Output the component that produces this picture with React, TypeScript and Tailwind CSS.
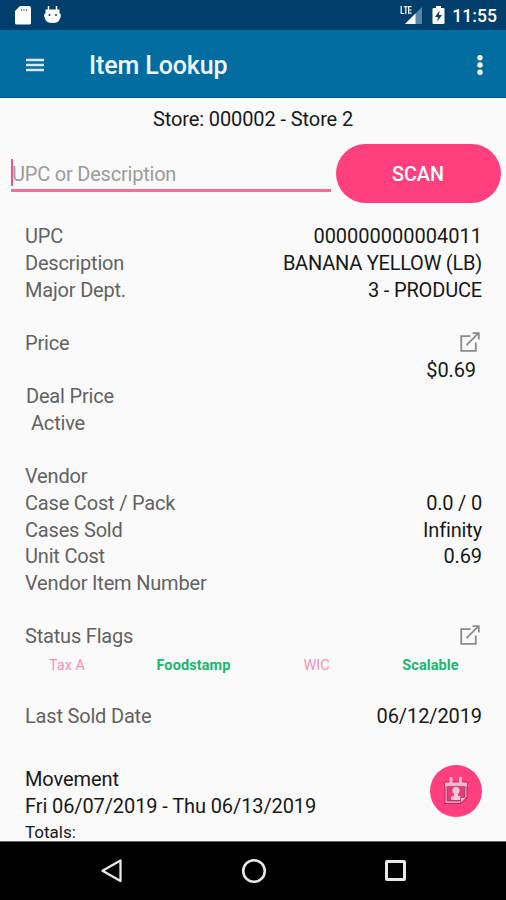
import React from 'react';

interface RowProps {
  label?: string;
  value?: React.ReactNode;
  className?: string;
  valueClassName?: string;
}

const Row: React.FC<RowProps> = ({ label, value, className = '', valueClassName = 'tracking-[-0.1px]' }) => (
  <div className="flex h-[26.67px] items-center justify-between whitespace-pre">
    <span className={`tracking-[-0.19px] text-[#626262] ${className}`}>{label}</span>
    <span className={`text-[#181818] ${valueClassName}`}>{value}</span>
  </div>
);

const EditIcon: React.FC = () => (
  <svg className="h-[22px] w-[22px]" viewBox="0 0 22 22" fill="none" stroke="#8b8b8b" strokeWidth="1.8">
    <path d="M11.5 4.2H2.2V18.8H16.8V10.5M7.5 13.2L19.5 1.2M13.5 1.2H19.8V7.4" />
  </svg>
);

const StatusBar: React.FC = () => (
  <div className="flex h-[30px] items-center bg-[#003e6b] text-white">
    <svg className="ml-[14px] h-5 w-[18px]" viewBox="0 0 18 20">
      <path d="M6 1H15Q17 1 17 3V18Q17 19.5 15 19.5H3Q1 19.5 1 18V6Z" fill="#fff" />
      <path d="M7.5 4V6M10 4V6M12.5 4V6" stroke="#55718e" strokeWidth="1.1" />
    </svg>
    <svg className="ml-[11px] h-5 w-[19px]" viewBox="0 0 19 20">
      <path d="M5.5 1V5M13.5 1V5" stroke="#fff" strokeWidth="1.5" />
      <path d="M2.5 4.5H16.5V8Q19 10 17 13.5Q16 18 9.5 18Q3 18 2 13.5Q0 10 2.5 8Z" fill="#fff" />
      <circle cx="6.5" cy="10" r="1" fill="#003e6b" />
      <circle cx="13" cy="10" r="1" fill="#003e6b" />
    </svg>
    <svg className="ml-auto h-5 w-[23px]" viewBox="0 0 23 20">
      <path d="M22 2V19H5Z" fill="#5c86a5" />
      <path d="M15.5 8.5V19H5Z" fill="#fff" />
      <path d="M1.2 1V8.5H4.2M3.8 1.7H7.6M5.8 1.7V9M11.5 1.7H8.6V8.2H11.5M8.6 5H11.5" fill="none" stroke="#fff" strokeWidth="1.2" />
    </svg>
    <svg className="ml-[9px] h-5 w-[13px]" viewBox="0 0 13 20">
      <path d="M4 1H9V3H11.5Q12.5 3 12.5 4V18Q12.5 19 11.5 19H1.5Q.5 19 .5 18V4Q.5 3 1.5 3H4Z" fill="#fff" />
      <path d="M7.5 5.5L3 12H6L5.2 16.5L10 10H7Z" fill="#003e6b" />
    </svg>
    <span className="mt-[2px] mr-[9px] ml-[7px] text-[17.6px] font-medium leading-5">11:55</span>
  </div>
);

const AppBar: React.FC = () => (
  <header className="flex h-[68px] items-center border-b border-[#00578a] bg-[#006c9f] text-white">
    <svg className="mt-[2px] ml-[25px] h-[14px] w-[20px]" viewBox="0 0 20 14" stroke="#dce9f5" strokeWidth="2.4">
      <path d="M1 2H19M1 7H19M1 12H19" />
    </svg>
    <h1 className="mt-[5px] ml-[44px] text-[25px] font-medium leading-8 tracking-[-0.1px] text-[#f0f6ff]">Item Lookup</h1>
    <svg className="mt-[2px] mr-[23px] ml-auto h-[22px] w-[6px]" viewBox="0 0 6 22" fill="#fff">
      <circle cx="3" cy="3.7" r="2.7" />
      <circle cx="3" cy="11" r="2.7" />
      <circle cx="3" cy="18.3" r="2.7" />
    </svg>
  </header>
);

const CalendarButton: React.FC = () => (
  <button className="flex h-[52px] w-[52px] items-center justify-center rounded-full bg-[#ff3f7e]">
    <svg className="h-[28px] w-[26px]" viewBox="0 0 26 28">
      <path d="M2 5H24V21L18 26.5H2Z" fill="#f9a8c6" stroke="#ad285a" strokeWidth="1" />
      <path d="M4.2 9.5H21.8V19L17 24H4.2Z" fill="#e83c77" stroke="#9e2753" strokeWidth=".8" />
      <path d="M8 0V6M17.5 0V6" stroke="#f7b6ce" strokeWidth="3" />
      <path d="M2 7.5H24" stroke="#f7b6ce" strokeWidth="3.4" />
      <circle cx="13" cy="13.5" r="3.6" fill="#fac5d8" />
      <path d="M11 16H15V18.5L18 20V23H8V20L11 18.5Z" fill="#fac5d8" />
      <path d="M17.5 26V20.5H23.5Z" fill="#f7b6ce" stroke="#b92f62" strokeWidth=".7" />
    </svg>
  </button>
);

const NavBar: React.FC = () => (
  <nav className="flex h-[59px] shrink-0 items-center justify-between border-t border-[#666] bg-black pr-[97px] pl-[98px]">
    <svg className="h-[26px] w-[26px]" viewBox="0 0 26 26" fill="none" stroke="#e8e8e8" strokeWidth="2.3" strokeLinejoin="round">
      <path d="M22.5 2.5V23L4.5 12.7Z" />
    </svg>
    <svg className="h-[26px] w-[26px]" viewBox="0 0 26 26" fill="none" stroke="#e8e8e8" strokeWidth="2.6">
      <circle cx="13" cy="13" r="10.8" />
    </svg>
    <svg className="h-[26px] w-[26px]" viewBox="0 0 26 26" fill="none" stroke="#e8e8e8" strokeWidth="3">
      <rect x="3.5" y="3.5" width="18" height="18" rx=".5" />
    </svg>
  </nav>
);

const App: React.FC = () => {
  return (
    <div className="flex h-[900px] w-[506px] flex-col overflow-hidden bg-[#fafafa] font-[Roboto,sans-serif] text-[20px] text-[#181818]">
      <StatusBar />
      <AppBar />

      <main className="flex min-h-0 flex-1 flex-col overflow-hidden">
        <p className="mt-[8px] text-center leading-[27px] tracking-[-0.1px]">Store: 000002 - Store 2</p>

        <div className="mt-[11px] flex h-[59px] justify-between pr-[5px] pl-[11px]">
          <div className="mt-[14px] flex h-[34px] w-[320px] items-center border-b-[3px] border-[#ff6c98]">
            <span className="mb-[3px] h-[27px] w-[2px] bg-[#e95689]" />
            <span className="-ml-[1px] tracking-[-0.21px] text-[#9b9b9b]">UPC or Description</span>
          </div>
          <button className="h-[59px] w-[165px] rounded-full bg-[#ff3f7e] pt-[2px] pr-[1px] text-[19.8px] font-medium text-white">SCAN</button>
        </div>

        <section className="mt-[20px] pr-[24px] pl-[25px]">
          <Row label="UPC" value="000000000004011" valueClassName="tracking-normal" />
          <Row label="Description" value="BANANA YELLOW (LB)" valueClassName="tracking-[-0.23px]" />
          <Row label="Major Dept." value="3 - PRODUCE" valueClassName="tracking-[-0.17px]" />
          <Row />
          <Row label="Price" value={<EditIcon />} valueClassName="mr-px" />
          <Row value="$0.69" valueClassName="mr-[6px] tracking-[-0.1px]" />
          <Row label="Deal Price" className="ml-px" />
          <Row label="Active" className="ml-[6px]" />
          <Row />
          <Row label="Vendor" />
          <Row label="Case Cost / Pack" value="0.0 / 0" valueClassName="tracking-[-0.19px]" />
          <Row label="Cases Sold" value="Infinity" valueClassName="tracking-[-0.15px]" />
          <Row label="Unit Cost" value="0.69" />
          <Row label="Vendor Item Number" />
          <Row />
          <Row label="Status Flags" value={<EditIcon />} valueClassName="mr-px" />
        </section>

        <div className="mt-[4px] grid grid-cols-[134px_119px_127px_100px] text-center text-[14.5px] leading-6">
          <span className="text-[#f492b3]">Tax A</span>
          <span className="font-bold tracking-[0.1px] text-[#1bb76e]">Foodstamp</span>
          <span className="text-[#f492b3]">WIC</span>
          <span className="ml-px font-bold tracking-[0.1px] text-[#1bb76e]">Scalable</span>
        </div>

        <div className="mt-[25px] pr-[24px] pl-[25px]">
          <Row label="Last Sold Date" value="06/12/2019" />
        </div>

        <div className="mt-[36px] flex justify-between pr-[24px] pl-[25px]">
          <div className="mt-[1px] leading-[26.67px] tracking-[-0.1px]">
            <p>Movement</p>
            <p>Fri 06/07/2019 - Thu 06/13/2019</p>
            <p className="text-[17px] leading-6 tracking-normal">Totals:</p>
          </div>
          <CalendarButton />
        </div>
      </main>

      <NavBar />
    </div>
  );
};

export default App;
